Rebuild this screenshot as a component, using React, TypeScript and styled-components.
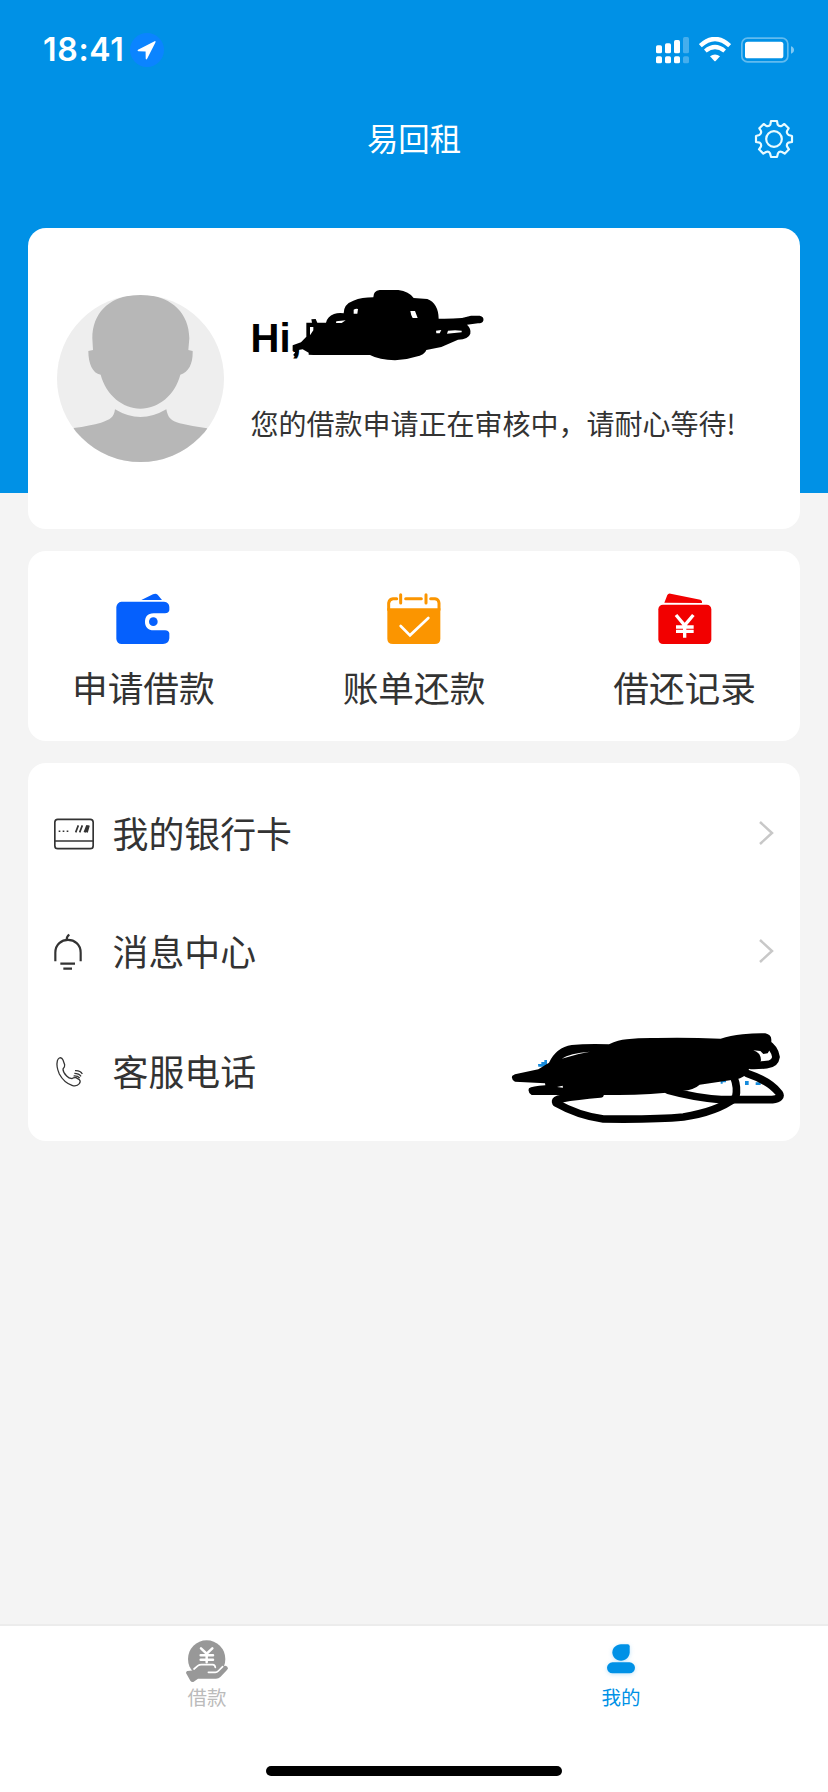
import React from 'react';
import styled, { createGlobalStyle } from 'styled-components';

const BLUE = '#0091e6';
const INK = '#333333';

const GlobalStyle = createGlobalStyle`
  * { box-sizing: border-box; }
  body {
    margin: 0;
    background: #f4f4f4;
    font-family: 'Noto Sans CJK SC', sans-serif;
    font-weight: 400;
    color: ${INK};
  }
  svg { display: block; flex: none; }
`;

const Screen = styled.div`
  width: 828px;
  height: 1792px;
  display: flex;
  flex-direction: column;
  overflow: hidden;
  background: linear-gradient(${BLUE} 0 493px, #f4f4f4 493px);
`;

const StatusBar = styled.div`
  height: 100px;
  padding: 0 34px 0 43px;
  display: flex;
  align-items: center;
  justify-content: space-between;
  color: #fff;
`;

const StatusGroup = styled.div<{ $gap: number }>`
  display: flex;
  align-items: center;
  gap: ${p => p.$gap}px;
`;

const Clock = styled.span`
  width: 81px;
  font: 600 32px/40px Inter, sans-serif;
  letter-spacing: 0.7px;
  white-space: nowrap;
`;

const NavBar = styled.header`
  height: 128px;
  padding: 19px 34px 0;
  display: grid;
  grid-template-columns: 1fr auto 1fr;
  align-items: start;
  color: #fff;
`;

const Title = styled.h1`
  grid-column: 2;
  margin: 0;
  font-size: 31.4px;
  font-weight: 400;
  line-height: 38px;
`;

const SettingsButton = styled.button`
  justify-self: end;
  border: 0;
  padding: 0;
  background: none;
`;

const Content = styled.main`
  flex: 1;
  padding: 0 28px;
  display: flex;
  flex-direction: column;
  gap: 22px;
`;

const Card = styled.section<{ $height: number }>`
  position: relative;
  height: ${p => p.$height}px;
  border-radius: 18px;
  background: #fff;
`;

const ProfileCard = styled(Card)`
  display: flex;
  align-items: center;
  gap: 27px;
  padding-left: 28.5px;
`;

const ProfileText = styled.div`
  display: flex;
  flex-direction: column;
  gap: 41px;
  padding-top: 1px;
`;

const Greeting = styled.h2`
  margin: 0;
  font: 700 40px/46px 'Liberation Sans', sans-serif;
  color: #000;
`;

const StatusText = styled.p`
  margin: 0;
  font-size: 28px;
  line-height: 42px;
  white-space: nowrap;
`;

const ActionCard = styled(Card)`
  display: flex;
  justify-content: space-between;
  padding: 42px 44px 0;
`;

const Action = styled.a`
  display: flex;
  flex-direction: column;
  align-items: center;
  gap: 16px;
`;

const ActionLabel = styled.span`
  font-size: 35.7px;
  line-height: 52px;
`;

const MenuCard = styled(Card)`
  padding: 10px 26px 0;
`;

const MenuRow = styled.a<{ $height: number }>`
  height: ${p => p.$height}px;
  display: flex;
  align-items: center;
`;

const MenuIcon = styled.span`
  width: 58.5px;
  padding-top: 4px;
`;

const MenuLabel = styled.span`
  flex: 1;
  font-size: 35.9px;
  line-height: 52px;
`;

const Scribble = styled.svg<{ $left: number; $top: number }>`
  position: absolute;
  left: ${p => p.$left}px;
  top: ${p => p.$top}px;
`;

const TabBar = styled.nav`
  height: 168px;
  border-top: 2px solid #ececec;
  background: #fff;
  display: flex;
  flex-direction: column;
  justify-content: space-between;
  align-items: center;
  padding-bottom: 16px;
`;

const Tabs = styled.div`
  align-self: stretch;
  display: grid;
  grid-template-columns: 1fr 1fr;
`;

const Tab = styled.a<{ $active?: boolean }>`
  display: flex;
  flex-direction: column;
  align-items: center;
  padding-top: 14px;
  font-size: 19.5px;
  line-height: 28px;
  color: ${p => (p.$active ? BLUE : '#bbbbbb')};
`;

const HomeIndicator = styled.div`
  width: 296px;
  height: 10px;
  border-radius: 5px;
  background: #000;
`;

const LocationIcon = () => (
  <svg width="34" height="34" viewBox="0 0 34 34">
    <circle cx="17" cy="17" r="17" fill="#0b84ff" />
    <path d="M8 16.8 L24.6 8.2 Q26 7.8 25.4 9.4 L17 26 Q16 27 15.7 25.5 L15.6 18.6 L8.4 18.3 Q6.8 17.8 8 16.8Z" fill="#fff" />
  </svg>
);

const SignalIcon = () => (
  <svg width="33" height="27" viewBox="0 0 99 81" fill="#fff">
    <rect x="0" y="25" width="18" height="24" rx="5" />
    <rect x="27" y="19" width="18" height="30" rx="5" />
    <rect x="54" y="9" width="18" height="40" rx="5" />
    <rect x="81" y="0" width="18" height="49" rx="5" opacity=".27" />
    <rect x="0" y="58" width="18" height="21" rx="5" />
    <rect x="27" y="58" width="18" height="21" rx="5" />
    <rect x="54" y="58" width="18" height="21" rx="5" />
    <rect x="81" y="58" width="18" height="21" rx="5" opacity=".27" />
  </svg>
);

const WifiIcon = () => (
  <svg width="32" height="27" viewBox="0 0 96 81">
    <path d="M4 26 Q48 -14 92 26" stroke="#fff" strokeWidth="13" fill="none" />
    <path d="M19 42 Q48 18 77 42" stroke="#fff" strokeWidth="12.500" fill="none" />
    <path d="M33 58 Q48 47 63 58 L50 72 Q48 74 46 72Z" fill="#fff" />
  </svg>
);

const BatteryIcon = () => (
  <svg width="53" height="26" viewBox="0 0 159 78">
    <rect x="2.5" y="3.5" width="138" height="71" rx="17" fill="none" stroke="#fff" strokeOpacity=".38" strokeWidth="5" />
    <rect x="12" y="14" width="115" height="50" rx="8" fill="#fff" />
    <path d="M150 28 Q159 31 159 39 Q159 47 150 50Z" fill="#fff" fillOpacity=".5" />
  </svg>
);

const GearIcon = () => (
  <svg width="40" height="40" viewBox="0 0 120 120" fill="none" stroke="#e9fbff" strokeWidth="6.500" strokeLinejoin="round">
    <circle cx="60" cy="60" r="23.5" />
    <path
      d="M51 6H69L71 17Q76 24 84 20L91 15L104 28L99 36Q97 44 104 48L114 51V69L103 71Q96 76 100 84L105 91L92 104L84 99Q76 96 72 103L69 114H51L48 103Q44 96 36 99L28 104L15 91L20 84Q24 76 17 71L6 69V51L16 48Q23 44 21 36L16 28L29 15L36 20Q44 24 49 17Z"
    />
  </svg>
);

const Avatar = () => (
  <svg width="167" height="167" viewBox="0 0 501 501">
    <defs>
      <clipPath id="avatar-circle"><circle cx="250.500" cy="250.500" r="250.500" /></clipPath>
    </defs>
    <g clipPath="url(#avatar-circle)">
      <rect width="501" height="501" fill="#eeeeee" />
      <g fill="#b7b7b7">
        <path d="M250 -1C165 -1 106 48 106 130L108 165L94 168C94 205 106 235 131 239C147 300 198 341 250 341C304 341 354 300 370 239C396 230 408 205 407 168L394 165L397 130C396 48 335 -1 250 -1Z" />
        <path d="M174 343Q250 389 328 343C333 370 342 377 368 385Q405 394 450 400L501 501H0L50 399Q100 392 132 383C160 374 171 367 174 343Z" />
      </g>
    </g>
  </svg>
);

const WalletIcon = () => (
  <svg width="54" height="52" viewBox="0 0 162 156" fill="#0560fd">
    <path d="M76 21L111 4Q119 0 125 5L138 21Z" />
    <path d="M16 26H144Q160 28 160 42V52Q158 61 147 61H113C94 61 87 73 87 87C87 101 96 112 113 112H147Q158 112 160 121V136Q158 153 141 153H17Q3 153 1 138V42Q3 28 16 26Z" />
    <circle cx="112" cy="86" r="13" />
  </svg>
);

const CalendarIcon = () => (
  <svg width="54" height="52" viewBox="0 0 162 156">
    <path d="M1 46H160V137Q160 153 143 153H18Q1 153 1 137Z" fill="#fb9500" />
    <path d="M5 50V30Q7 18 18 17H29M56 17H103M131 17H144Q155 18 156 30V50M41 5V30M117 5V30" fill="none" stroke="#fb9500" strokeWidth="9" strokeLinecap="round" />
    <path d="M41 99L69 127L124 75" fill="none" stroke="#fff" strokeWidth="8" strokeLinecap="round" />
  </svg>
);

const RecordIcon = () => (
  <svg width="54" height="52" viewBox="0 0 162 156">
    <path d="M19 29L28 6Q31 0 38 2L127 20Q134 23 132 30Z" fill="#f20000" />
    <rect x="1" y="35" width="159" height="118" rx="14" fill="#f20000" />
    <path d="M54 66L80 97L106 66M54 102H107M54 115H107M80 97V134" fill="none" stroke="#fff" strokeWidth="10" />
  </svg>
);

const CardIcon = () => (
  <svg width="40" height="32" viewBox="0 0 120 96" fill="none" stroke={INK} strokeWidth="5">
    <rect x="2.500" y="4" width="115" height="88" rx="9" />
    <path d="M3 69H117" />
    <path d="M14 40h5M26 40h5M38 40h5" strokeWidth="4.500" />
    <path d="M65 43L73 22M77 43L85 22" strokeWidth="5" />
    <path d="M92 43L100 22M98 43L104 22" strokeWidth="7" />
  </svg>
);

const BellIcon = () => (
  <svg width="28" height="38" viewBox="0 0 84 114" fill="none" stroke={INK} strokeWidth="6.500">
    <path d="M4 85V59C4 8 80 8 80 59V85M38 20Q38 10 46 5M19 92H63M28 107H54" />
  </svg>
);

const PhoneIcon = () => (
  <svg width="34" height="32" viewBox="-6 0 102 96" fill="none" stroke={INK} strokeWidth="3.800" strokeLinejoin="round">
    <path d="M10 6Q17 3 21 12L26 26Q27 33 21 39Q21 50 32 60Q38 67 48 68Q52 64 60 65L70 71Q75 76 70 83Q62 93 48 88Q24 80 10 54Q0 31 4 15Q5 9 10 6Z" />
    <path d="M53 60Q65 59 71 66M55 52Q69 52 75 61M57 44Q73 43 79 54" />
  </svg>
);

const Chevron = styled.svg`
  margin-top: 2px;
`;

const ChevronIcon = () => (
  <Chevron width="16" height="26" viewBox="0 0 16 26" fill="none" stroke="#c8c8c8" strokeWidth="2.500">
    <path d="M2 2L14 13L2 24" />
  </Chevron>
);

const LoanTabIcon = () => (
  <svg width="42" height="43" viewBox="0 0 126 129">
    <circle cx="62" cy="57" r="56" fill="#989898" />
    <path d="M45 25L62 41L79 25M44 46H81M44 59H81M62 42V67" fill="none" stroke="#fff" strokeWidth="7.500" strokeLinecap="round" />
    <path
      d="M4 93L26 91L38 82Q42 79 48 79H80Q89 80 88 91H97L113 78Q124 74 126 85Q126 88 103 111Q98 116 90 116H36L22 126Q16 127 13 122L0 99Q0 94 4 93Z"
      fill="#989898"
    />
    <path d="M24 87L36 77Q40 74 46 74H80Q87 75 88 82M67 97H88Q93 97 97 93L110 80" fill="none" stroke="#fff" strokeWidth="5" strokeLinecap="round" />
  </svg>
);

const ProfileTabIcon = () => (
  <svg width="42" height="43" viewBox="0 0 126 129">
    <g fill={BLUE}>
      <path d="M45 13H65Q71 13 71 19V37C71 51 59 62 45 62C30 62 19 51 19 37C19 24 31 13 45 13Z" />
      <rect x="3" y="67" width="84" height="33" rx="16.500" />
    </g>
  </svg>
);

const ActiveTabIcon = styled.span`
  transform: translateX(6px);
  filter: drop-shadow(0 1px 2px rgba(0, 145, 230, 0.25));
`;

/* Marker strokes that hide the account name */
const NameScribble = () => (
  <Scribble $left={202} $top={42} width="300" height="180" viewBox="0 0 900 540">
    <path
      fillRule="evenodd"
      d="M188 226L213 217L229 200V158H246L244 148L257 147L262 158H288Q292 140 312 132Q325 128 341 130Q341 102 370 92Q396 82 430 82Q430 62 449 60H505Q537 64 551 84L592 87Q625 100 626 146Q660 147 696 144L723 137H749Q763 140 760 152Q757 160 744 160L711 164Q724 176 721 191Q716 207 684 209L634 231L589 240Q584 256 557 260Q527 270 495 271Q448 270 420 255H250L236 254V248L218 238L188 243ZM371 119Q378 114 384 117L382 131H371ZM541 123H555L563 144H548Q543 137 541 123ZM618 182L634 180L629 190H619ZM654 182Q676 180 695 182V187L651 191ZM319 154L347 151L335 159H318ZM240 171H250V181L240 196Z"
    />
    <path d="M197 230Q207 241 193 258" fill="none" stroke="#000" strokeWidth="9" />
  </Scribble>
);

/* Marker strokes that hide the service number, with traces of the blue digits */
const PhoneScribble = () => (
  <Scribble $left={462} $top={247} width="330" height="140" viewBox="0 0 990 420">
    <path d="M144 162h10v-6h9v-6h8v20h-26zM692 212h16v5h-10v4h-6zM765 213h11v12h-11zM797 217h15v8h-15z" fill="#168bdc" />
    <path
      d="M75 193L145 178L177 158Q199 112 245 105Q290 101 357 103Q385 90 410 88Q450 83 500 84Q590 82 692 86Q720 77 758 73Q795 69 826 70Q844 74 844 89V104Q843 113 833 130L820 132L811 123L790 121Q812 127 813 151Q809 163 804 166L777 176L772 191Q762 201 740 208L629 224Q610 241 579 242Q480 255 387 255H125Q112 247 117 235Q125 229 166 226L165 220L75 215Q62 207 67 197Z"
    />
    <path d="M215 146Q239 130 300 125L266 132ZM201 231L218 227L219 233Z" fill="#fff" />
    <g fill="none" stroke="#000" strokeWidth="23" strokeLinecap="round" strokeLinejoin="round">
      <path d="M825 98Q854 113 858 141Q855 162 830 164Q800 167 783 166" />
      <path d="M771 190Q839 213 867 249Q878 265 847 269H693Q610 262 535 241" />
      <path d="M732 203Q744 233 737 263Q680 306 580 321Q500 329 340 327Q265 317 198 279Q193 268 215 266Q260 258 330 252" />
    </g>
  </Scribble>
);

const actions = [
  { label: '申请借款', Icon: WalletIcon },
  { label: '账单还款', Icon: CalendarIcon },
  { label: '借还记录', Icon: RecordIcon },
];

const menu = [
  { label: '我的银行卡', Icon: CardIcon, height: 118, chevron: true },
  { label: '消息中心', Icon: BellIcon, height: 117, chevron: true },
  { label: '客服电话', Icon: PhoneIcon, height: 124, chevron: false },
];

export default function App() {
  return (
    <>
      <GlobalStyle />
      <Screen>
        <StatusBar>
          <StatusGroup $gap={6}>
            <Clock>18:41</Clock>
            <LocationIcon />
          </StatusGroup>
          <StatusGroup $gap={10}>
            <SignalIcon />
            <WifiIcon />
            <BatteryIcon />
          </StatusGroup>
        </StatusBar>
        <NavBar>
          <Title>易回租</Title>
          <SettingsButton aria-label="设置"><GearIcon /></SettingsButton>
        </NavBar>
        <Content>
          <ProfileCard $height={301}>
            <Avatar />
            <ProfileText>
              <Greeting>Hi,</Greeting>
              <StatusText>您的借款申请正在审核中，请耐心等待!</StatusText>
            </ProfileText>
            <NameScribble />
          </ProfileCard>
          <ActionCard $height={190}>
            {actions.map(({ label, Icon }) => (
              <Action key={label}>
                <Icon />
                <ActionLabel>{label}</ActionLabel>
              </Action>
            ))}
          </ActionCard>
          <MenuCard $height={378}>
            {menu.map(({ label, Icon, height, chevron }) => (
              <MenuRow key={label} $height={height}>
                <MenuIcon><Icon /></MenuIcon>
                <MenuLabel>{label}</MenuLabel>
                {chevron && <ChevronIcon />}
              </MenuRow>
            ))}
            <PhoneScribble />
          </MenuCard>
        </Content>
        <TabBar>
          <Tabs>
            <Tab>
              <LoanTabIcon />
              <span>借款</span>
            </Tab>
            <Tab $active>
              <ActiveTabIcon><ProfileTabIcon /></ActiveTabIcon>
              <span>我的</span>
            </Tab>
          </Tabs>
          <HomeIndicator />
        </TabBar>
      </Screen>
    </>
  );
}
